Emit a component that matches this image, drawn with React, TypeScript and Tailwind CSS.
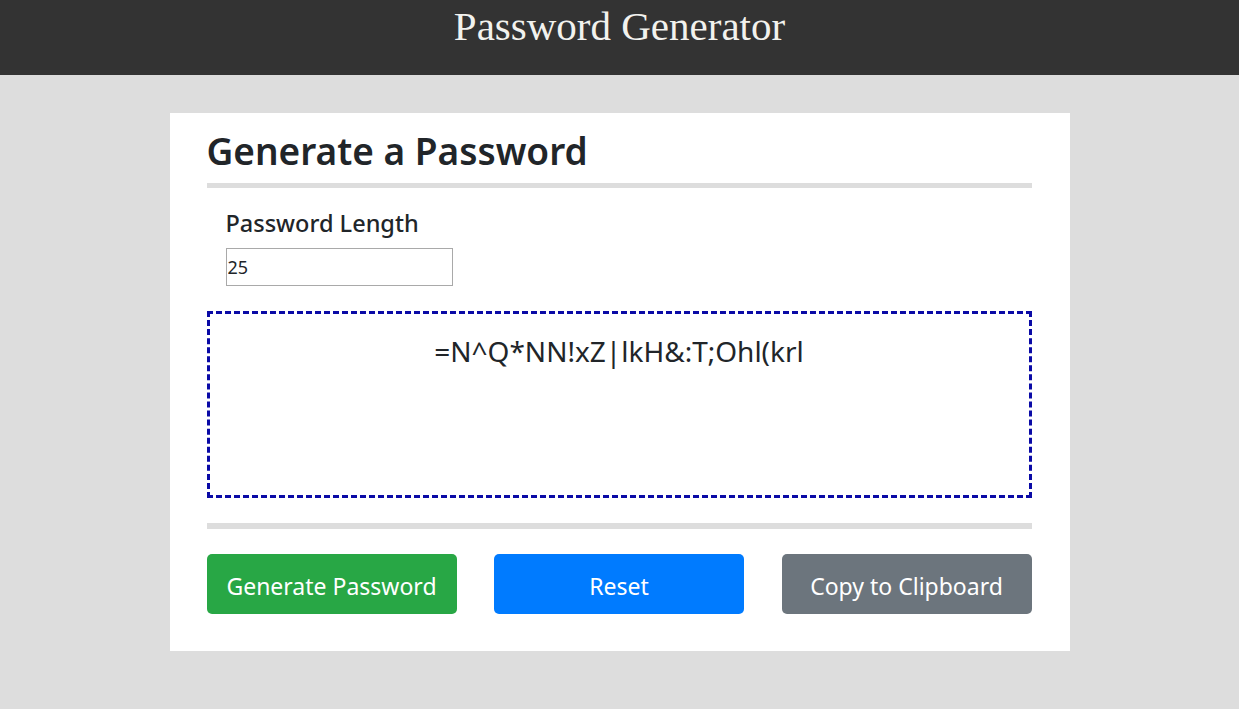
import { useState } from "react";

const btn =
  "h-[60px] w-[250px] rounded-[5px] pt-[5px] text-[23px] text-white font-['Noto_Sans',sans-serif]";

export default function App() {
  const [length, setLength] = useState("25");
  const [password] = useState("=N^Q*NN!xZ|lkH&:T;Ohl(krl");

  return (
    <div className="min-h-[709px] bg-[#dddddd] font-['Noto_Sans',sans-serif] text-[#212529]">
      <header className="flex h-[75px] justify-center bg-[#333333] pt-[2px]">
        <h1 className="font-['Liberation_Serif',serif] text-[41px] leading-[48px] text-[#f2f2ee]">
          Password Generator
        </h1>
      </header>

      <main className="mx-auto mt-[38px] w-[900px] bg-white pt-[14px] pr-[38px] pb-[37px] pl-[37px]">
        <h2 className="text-[37px] leading-[48px] font-semibold">Generate a Password</h2>
        <hr className="mt-[8px] h-[5px] border-0 bg-[#dddddd]" />

        <div className="px-[19px] pt-[20px]">
          <label htmlFor="length" className="block text-[23.5px] leading-[30px] font-medium">
            Password Length
          </label>
          <input
            id="length"
            type="text"
            value={length}
            onChange={(e) => setLength(e.target.value)}
            className="mt-[10px] h-[38px] w-[227px] border border-[#a9a9a9] px-[1px] text-[18px] outline-none"
          />
        </div>

        <div className="mt-[25px] h-[187px] border-[3px] border-dashed border-[#0a0aa6] pt-[17px] text-center text-[28px] leading-[40px]">
          {password}
        </div>

        <hr className="mt-[25px] h-[6px] border-0 bg-[#dddddd]" />

        <div className="mt-[25px] flex justify-between">
          <button type="button" className={`${btn} bg-[#28a745]`}>
            Generate Password
          </button>
          <button type="button" className={`${btn} bg-[#007bff]`}>
            Reset
          </button>
          <button type="button" className={`${btn} bg-[#6c757d]`}>
            Copy to Clipboard
          </button>
        </div>
      </main>
    </div>
  );
}
